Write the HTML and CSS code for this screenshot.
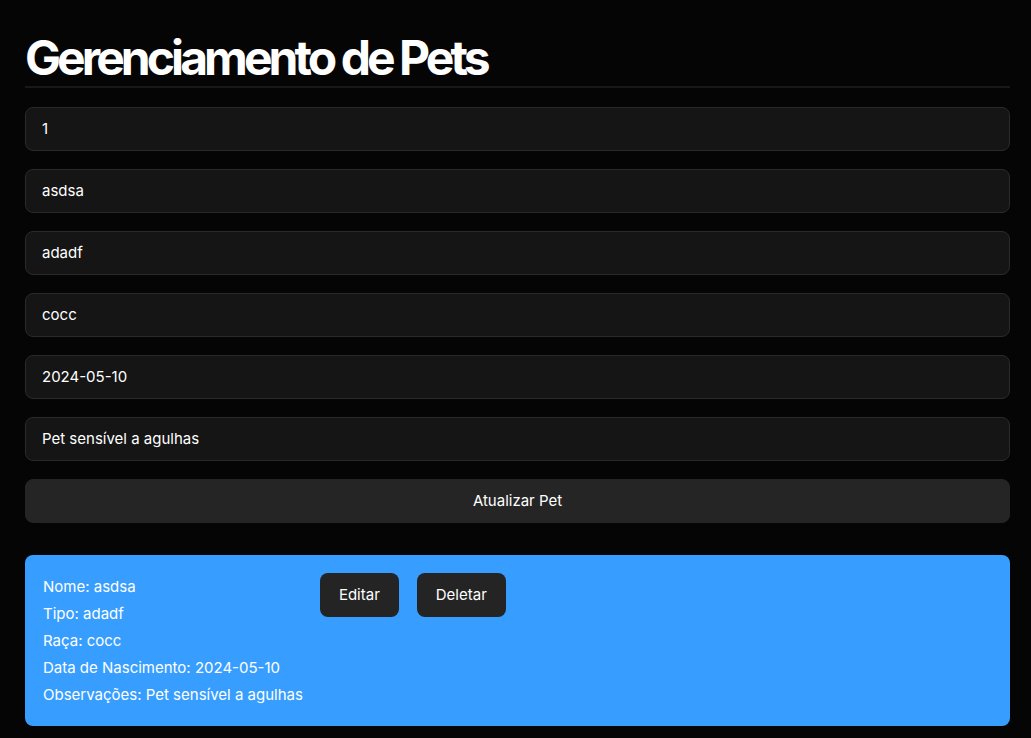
FILE: index.html
```html
<!DOCTYPE html>
<html lang="pt-BR">
<head>
<meta charset="utf-8">
<title>Gerenciamento de Pets</title>
<link rel="stylesheet" href="styles.css">
</head>
<body>
<main class="page">
  <h1 class="title">Gerenciamento de Pets</h1>
  <form class="form">
    <input class="field" type="text" value="1">
    <input class="field" type="text" value="asdsa">
    <input class="field" type="text" value="adadf">
    <input class="field" type="text" value="cocc">
    <input class="field" type="text" value="2024-05-10">
    <input class="field" type="text" value="Pet sensível a agulhas">
    <button class="submit" type="button">Atualizar Pet</button>
  </form>
  <section class="card">
    <div class="info">
      <p class="line">Nome: asdsa</p>
      <p class="line">Tipo: adadf</p>
      <p class="line">Raça: cocc</p>
      <p class="line">Data de Nascimento: 2024-05-10</p>
      <p class="line">Observações: Pet sensível a agulhas</p>
    </div>
    <div class="actions">
      <button class="action" type="button">Editar</button>
      <button class="action" type="button">Deletar</button>
    </div>
  </section>
</main>
</body>
</html>
```

FILE: styles.css
```css
* { box-sizing: border-box; }
html, body {
  margin: 0;
  background: #050505;
  color: #ffffff;
  font-family: Inter, "Noto Sans", sans-serif;
}
.page {
  padding: 32px 21px 12px 25px;
}
.title {
  margin: 0;
  font-size: 48px;
  line-height: 1.1;
  font-weight: 700;
  letter-spacing: -0.082em;
  padding-bottom: 1px;
  border-bottom: 2px solid #181818;
}
.form {
  display: flex;
  flex-direction: column;
  gap: 18px;
  margin-top: 19px;
}
.field {
  height: 44px;
  padding: 0 16px;
  background: #151515;
  border: 1px solid #2a2a2a;
  border-radius: 8px;
  color: #ffffff;
  font-family: Inter, "Noto Sans", sans-serif;
  font-size: 15px;
  outline: none;
}
.submit {
  height: 44px;
  background: #252525;
  border: 1px solid #252525;
  border-radius: 8px;
  color: #ffffff;
  font-family: Inter, "Noto Sans", sans-serif;
  font-size: 15px;
}
.card {
  margin-top: 32px;
  background: #379eff;
  border-radius: 8px;
  padding: 18px;
  display: flex;
  gap: 17px;
  align-items: flex-start;
}
.info {
  display: flex;
  flex-direction: column;
}
.line {
  margin: 0;
  font-size: 15px;
  line-height: 27px;
}
.actions {
  display: flex;
  gap: 18px;
}
.action {
  height: 44px;
  padding: 0 19px;
  background: #242424;
  border: none;
  border-radius: 8px;
  color: #ffffff;
  font-family: Inter, "Noto Sans", sans-serif;
  font-size: 15px;
}
```
